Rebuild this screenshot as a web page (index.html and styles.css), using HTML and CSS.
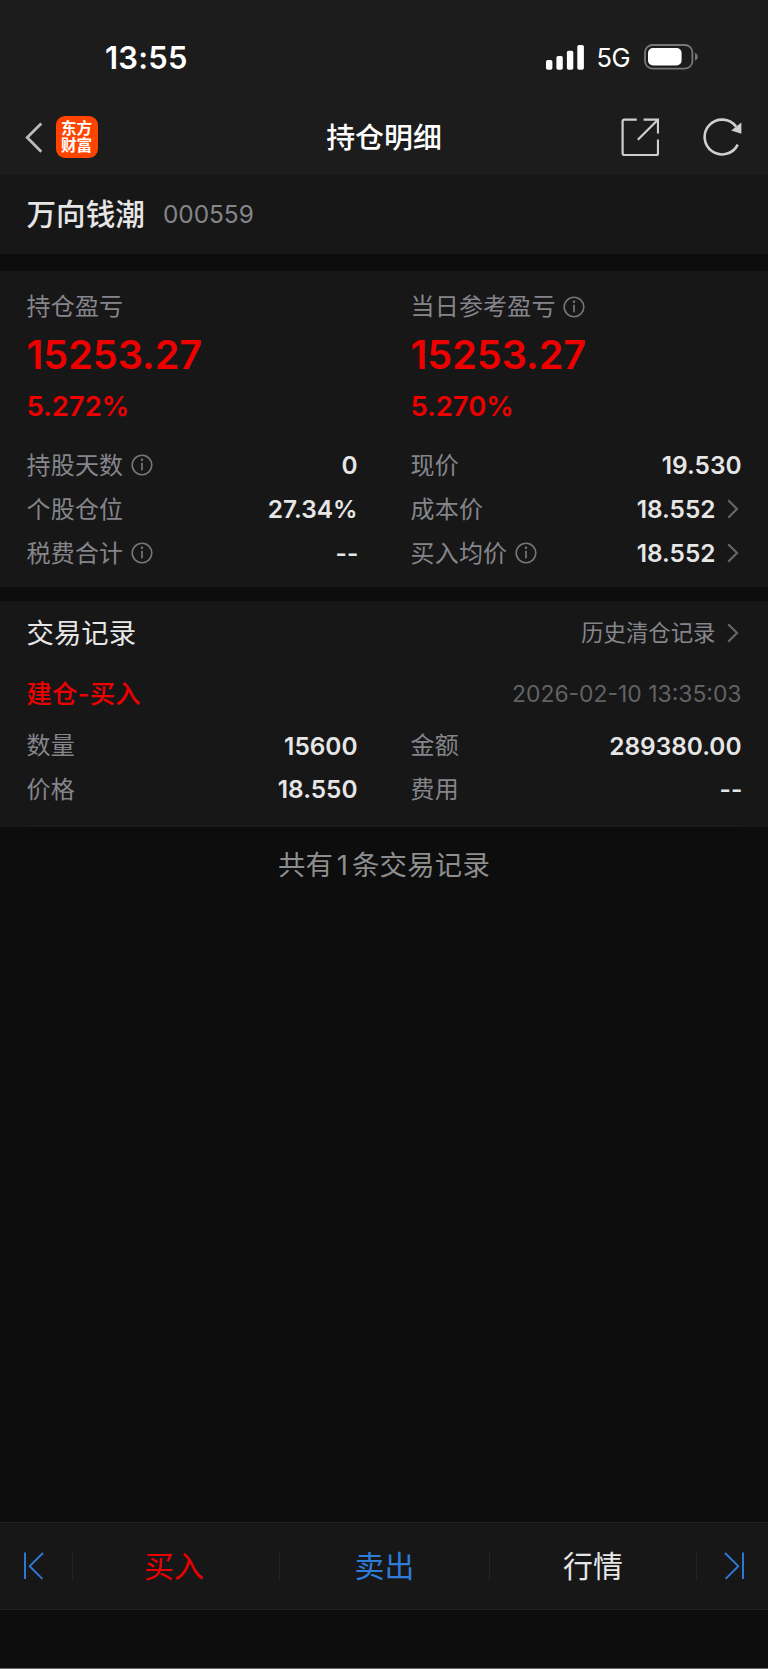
FILE: index.html
```html
<!DOCTYPE html>
<html lang="zh-CN">
<head>
<meta charset="utf-8">
<title>持仓明细</title>
<link rel="stylesheet" href="styles.css">
</head>
<body>
<svg class="defs" width="0" height="0">
  <symbol id="info" viewBox="0 0 22 22"><circle cx="11" cy="11" r="9.8" fill="none" stroke="currentColor" stroke-width="1.6"/><path d="M11 8.8v7.4" stroke="currentColor" stroke-width="1.7"/><circle cx="11" cy="5.7" r="1.2" fill="currentColor"/></symbol>
  <symbol id="chev" viewBox="0 0 12 20"><path d="M1.2 1.2 10 10 1.2 18.8" fill="none" stroke="currentColor" stroke-width="2.2"/></symbol>
</svg>
<div class="screen">
  <header class="top">
    <div class="status">
      <span class="time">13:55</span>
      <div class="status-right">
        <svg class="signal" width="38" height="25" viewBox="0 0 38 25" fill="#fff"><rect x="0" y="15" width="6.4" height="9.7" rx="1.7"/><rect x="10.4" y="11" width="6.4" height="13.7" rx="1.7"/><rect x="20.9" y="5.7" width="6.4" height="19" rx="1.7"/><rect x="31.3" y="0" width="6.6" height="24.7" rx="1.7"/></svg>
        <span class="net">5G</span>
        <svg class="battery" width="55" height="26" viewBox="0 0 55 26"><rect x="1" y="1" width="47.4" height="23.6" rx="7.6" fill="none" stroke="#777" stroke-width="1.8"/><rect x="4" y="4" width="33.6" height="17.4" rx="5" fill="#fff"/><path d="M51 8.8q2.8 1.2 2.8 4t-2.8 4z" fill="#777"/></svg>
      </div>
    </div>
    <div class="nav">
      <svg class="back" width="18" height="32" viewBox="0 0 18 32"><path d="M16.3 1.5 2.2 15.6 16.3 29.7" fill="none" stroke="#bcbcbc" stroke-width="2.8"/></svg>
      <div class="logo"><span>东方财富</span></div>
      <h1 class="title">持仓明细</h1>
      <svg class="share" width="38" height="38" viewBox="0 0 38 38" fill="none" stroke="#cfcfcf" stroke-width="2.2"><path d="M15.8 1.6H3.4Q1.6 1.6 1.6 3.4v31.8q0 1.8 1.8 1.8h31.8q1.8 0 1.8-1.8V21.6M22.6 1.6H37v13.8M36.4 2.2 16.8 21.8"/></svg>
      <svg class="reload" width="40" height="40" viewBox="0 0 40 40"><path d="M34.7 27.6A17.4 17.4 0 1 1 33 9.6" fill="none" stroke="#cfcfcf" stroke-width="2.6"/><path d="M38.4 5.4v11.3L28.2 13.4z" fill="#cfcfcf"/></svg>
    </div>
  </header>

  <section class="stock"><span class="name">万向钱潮</span><span class="code">000559</span></section>

  <section class="panel holding">
    <div class="col">
      <div class="row"><span class="label">持仓盈亏</span></div>
      <div class="profit">15253.27</div>
      <div class="rate">5.272%</div>
      <div class="row"><span class="label">持股天数</span><svg class="info"><use href="#info"/></svg><b class="val">0</b></div>
      <div class="row"><span class="label">个股仓位</span><b class="val">27.34%</b></div>
      <div class="row"><span class="label">税费合计</span><svg class="info"><use href="#info"/></svg><b class="val dash">--</b></div>
    </div>
    <div class="col">
      <div class="row"><span class="label">当日参考盈亏</span><svg class="info"><use href="#info"/></svg></div>
      <div class="profit">15253.27</div>
      <div class="rate">5.270%</div>
      <div class="row"><span class="label">现价</span><b class="val">19.530</b></div>
      <div class="row"><span class="label">成本价</span><b class="val">18.552</b><svg class="chev"><use href="#chev"/></svg></div>
      <div class="row"><span class="label">买入均价</span><svg class="info"><use href="#info"/></svg><b class="val">18.552</b><svg class="chev"><use href="#chev"/></svg></div>
    </div>
  </section>

  <section class="panel records">
    <div class="head"><h2 class="heading">交易记录</h2><span class="history">历史清仓记录</span><svg class="chev"><use href="#chev"/></svg></div>
    <div class="entry"><span class="kind">建仓-买入</span><time class="date">2026-02-10 13:35:03</time></div>
    <div class="cols">
      <div class="col">
        <div class="row"><span class="label">数量</span><b class="val">15600</b></div>
        <div class="row"><span class="label">价格</span><b class="val">18.550</b></div>
      </div>
      <div class="col">
        <div class="row"><span class="label">金额</span><b class="val">289380.00</b></div>
        <div class="row"><span class="label">费用</span><b class="val dash">--</b></div>
      </div>
    </div>
    <div class="rule"></div>
  </section>

  <p class="summary">共有<span class="count">1</span>条交易记录</p>

  <footer class="bar">
    <div class="edge first"><svg width="22" height="28" viewBox="0 0 22 28" fill="none" stroke="#2f7cd8" stroke-width="1.9"><path d="M2 .5v26.6M20 1 6.7 14.2 19.4 26.8"/></svg></div>
    <div class="tab buy">买入</div>
    <div class="tab sell">卖出</div>
    <div class="tab quote">行情</div>
    <div class="edge last"><svg width="22" height="28" viewBox="0 0 22 28" fill="none" stroke="#2f7cd8" stroke-width="1.9"><path d="M20 .5v26.6M2 1 15.3 14.2 2.6 26.8"/></svg></div>
  </footer>
  <div class="home"></div>
</div>
</body>
</html>
```
FILE: styles.css
```css
* { box-sizing: border-box; }
body { margin: 0; background: #0d0d0d; font-family: Inter, "Noto Sans CJK SC", sans-serif; color: #e6e6e6; }
h1, h2, p { margin: 0; }
svg { display: block; flex: none; }
.defs { position: absolute; }
.screen { width: 768px; height: 1669px; display: flex; flex-direction: column; background: #0d0d0d; white-space: nowrap; }

.top { height: 175px; background: #1c1c1c; flex: none; }
.status { height: 100px; padding: 14px 69px 0 105px; display: flex; align-items: center; justify-content: space-between; color: #fff; }
.time { font-size: 31px; font-weight: 600; letter-spacing: .2px; }
.status-right { display: flex; align-items: center; }
.net { font-size: 25.5px; margin: 1px 14px 0 12px; letter-spacing: -.5px; }
.nav { height: 75px; padding: 0 25px 0 25px; display: grid; grid-template-columns: 31px 42px 1fr 38px 44px 40px; align-items: center; }
.logo { width: 42px; height: 42px; margin-top: -2px; border-radius: 9px; background: #ff4400; color: #fff; display: flex; align-items: center; justify-content: center; font-family: "Noto Sans CJK SC", sans-serif; font-size: 15.6px; font-weight: 700; line-height: 17px; }
.logo span { width: 32px; margin-top: -1px; white-space: normal; word-break: break-all; }
.title { grid-column: 3; text-align: center; padding-left: 49px; font-size: 28.9px; font-weight: 500; color: #fff; line-height: 40px; }
.share { margin-top: -1px; }
.reload { grid-column: 6; margin-top: -1px; }

.stock { height: 79px; padding: 0 26.5px; display: flex; align-items: center; gap: 18px; background: #171717; margin-bottom: 17px; flex: none; }
.name { font-size: 29.6px; font-weight: 500; margin-top: -5px; }
.code { font-size: 24.4px; color: #85858b; margin-top: -1px; }

.panel { background: #171717; flex: none; }
.holding { height: 316px; padding: 14px 26.5px 0 27px; display: grid; grid-template-columns: 330.5px 330.5px; gap: 53.5px; }
.row { height: 43.6px; display: flex; align-items: center; }
.row:first-child .label { margin-top: -4px; }
.label { font-size: 24px; color: #85858b; letter-spacing: .2px; margin: -3px 0 0 -.5px; }
.info { width: 22px; height: 22px; margin-left: 7.5px; color: #76767a; }
.val { margin-left: auto; font-size: 24.4px; font-weight: 600; }
.dash { letter-spacing: .2px; margin-right: -1px; }
.chev { width: 12px; height: 20px; margin: 0 3px 0 11px; color: #66666a; }
.profit { height: 53px; line-height: 53px; margin-left: -.5px; font-size: 39.6px; font-weight: 600; color: #ee0000; }
.rate { height: 48px; line-height: 48px; margin: 0 0 14px -.5px; font-size: 27.4px; font-weight: 600; color: #ee0000; }

.records { height: 226px; margin-top: 14px; }
.head { height: 64px; padding: 0 26.5px; display: flex; align-items: center; }
.heading { font-size: 27.4px; font-weight: 400; margin-top: -4px; }
.history { margin: -4px 0 0 auto; font-size: 22.4px; color: #85858b; }
.entry { height: 59px; padding: 0 26.5px; display: flex; align-items: center; justify-content: space-between; }
.kind { font-size: 25.3px; font-weight: 500; letter-spacing: .3px; color: #ee0000; margin-top: -5px; }
.date { font-size: 22.9px; color: #626264; margin-top: -1px; }
.cols { padding: 0 26.5px 0 27px; display: grid; grid-template-columns: 330.5px 330.5px; gap: 53.5px; }
.rule { height: 1px; margin: 14px 26px 0; background: #1d1d1d; }

.summary { height: 76px; line-height: 76px; text-align: center; font-size: 27.4px; color: #8e8e8e; letter-spacing: .2px; }
.count { margin: 0 4px 0 3.5px; }

.bar { height: 88px; margin-top: auto; border-top: 1px solid #202020; border-bottom: 1px solid #202020; background: #171717; display: grid; grid-template-columns: 73px 207px 210px 207px 71px; align-items: center; flex: none; }
.edge, .tab { height: 30px; display: flex; align-items: center; border-right: 1px solid #232323; }
.edge { padding-left: 23px; }
.edge.last { border: 0; padding-left: 26px; }
.tab { justify-content: center; font-size: 29.9px; line-height: 30px; padding-bottom: 1px; }
.buy { color: #ee0000; padding-right: 4px; }
.sell { color: #2f7cd8; }
.quote { color: #e6e6e6; }
.home { height: 59px; border-bottom: 1px solid #6a6a6a; flex: none; }
```
